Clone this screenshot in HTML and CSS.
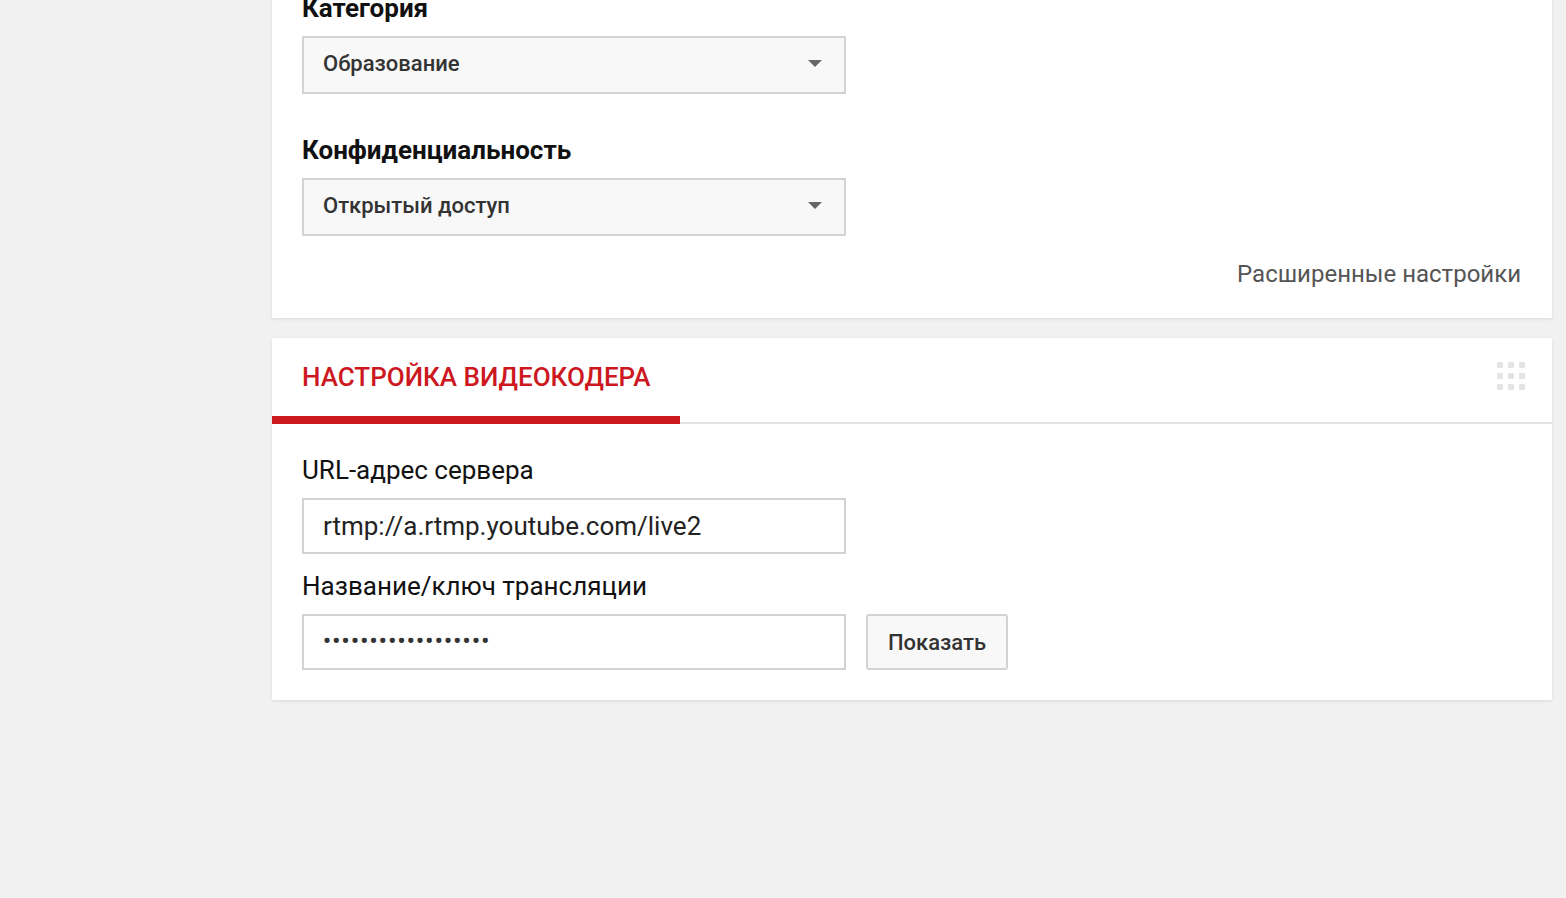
FILE: index.html
```html
<!DOCTYPE html>
<html lang="ru">
<head>
  <meta charset="UTF-8">
  <title>Прямая трансляция</title>
  <link rel="stylesheet" href="styles.css">
</head>
<body>
  <div class="page">
    <section class="card card-info">
      <div class="field">
        <label class="field-label bold">Категория</label>
        <div class="select">
          <span>Образование</span>
          <span class="arrow"></span>
        </div>
      </div>
      <div class="field">
        <label class="field-label bold">Конфиденциальность</label>
        <div class="select">
          <span>Открытый доступ</span>
          <span class="arrow"></span>
        </div>
      </div>
      <div class="advanced">
        <a href="#" class="advanced-link">Расширенные настройки</a>
      </div>
    </section>

    <section class="card card-encoder">
      <div class="card-header">
        <div class="tab">НАСТРОЙКА ВИДЕОКОДЕРА</div>
        <div class="drag-handle">
          <span></span><span></span><span></span>
          <span></span><span></span><span></span>
          <span></span><span></span><span></span>
        </div>
      </div>
      <div class="card-body">
        <div class="field">
          <label class="field-label" for="server-url">URL-адрес сервера</label>
          <input type="text" id="server-url" class="text-input" value="rtmp://a.rtmp.youtube.com/live2" readonly>
        </div>
        <div class="field">
          <label class="field-label" for="stream-key">Название/ключ трансляции</label>
          <div class="key-row">
            <div class="text-input key-input" id="stream-key">••••••••••••••••••</div>
            <button class="show-btn">Показать</button>
          </div>
        </div>
      </div>
    </section>
  </div>
</body>
</html>
```

FILE: styles.css
```css
:root {
  --page-bg: #f1f1f1;
  --border: #d3d3d3;
  --field-bg: #f8f8f8;
  --text: #222;
  --red: #cc181e;
}

body {
  margin: 0;
  background-color: var(--page-bg);
  font-family: Roboto, 'Noto Sans', Arial, sans-serif;
  color: var(--text);
}

.page {
  width: 1280px;
  margin-left: 272px;
  margin-top: -30px;
}

.card {
  background-color: white;
  box-shadow: 0 1px 3px rgba(0,0,0,0.1);
  margin-bottom: 20px;
}

.card-info {
  padding: 24px 31px 30px 30px;
}

.field-label {
  display: block;
  font-size: 26px;
  line-height: 28px;
  margin-bottom: 14px;
  color: #111;
}

.field-label.bold {
  font-weight: 700;
  font-size: 26px;
}

.card-info .field + .field {
  margin-top: 42px;
}

.select {
  width: 544px;
  height: 58px;
  box-sizing: border-box;
  border: 2px solid var(--border);
  background-color: var(--field-bg);
  display: flex;
  align-items: center;
  justify-content: space-between;
  padding: 0 22px 3px 19px;
  font-size: 22px;
  font-weight: 500;
  color: #333;
}

.arrow {
  width: 0;
  height: 0;
  border-left: 7px solid transparent;
  border-right: 7px solid transparent;
  border-top: 7px solid #666;
}

.advanced {
  display: flex;
  justify-content: flex-end;
  margin-top: 24px;
}

.advanced-link {
  font-size: 24px;
  line-height: 28px;
  color: #555;
  text-decoration: none;
}

.card-header {
  display: flex;
  justify-content: space-between;
  align-items: center;
  border-bottom: 2px solid #e4e4e4;
  height: 84px;
}

.tab {
  box-sizing: border-box;
  width: 408px;
  height: 86px;
  margin-bottom: -2px;
  padding: 0 30px;
  display: flex;
  align-items: center;
  white-space: nowrap;
  border-bottom: 8px solid var(--red);
  color: var(--red);
  font-size: 26px;
  font-weight: 500;
}

.drag-handle {
  display: grid;
  grid-template-columns: repeat(3, 6px);
  gap: 5px;
  margin-right: 27px;
  margin-top: -8px;
}

.drag-handle span {
  width: 6px;
  height: 6px;
  border-radius: 1px;
  background-color: #e4e4e4;
}

.card-body {
  padding: 32px 30px 30px;
}

.card-body .field + .field {
  margin-top: 18px;
}

.text-input {
  display: block;
  width: 544px;
  height: 56px;
  box-sizing: border-box;
  border: 2px solid var(--border);
  background-color: white;
  padding: 0 19px;
  font-family: inherit;
  font-size: 26px;
  color: var(--text);
  outline: none;
}

.key-row {
  display: flex;
  align-items: center;
  gap: 20px;
}

.key-input {
  display: flex;
  align-items: center;
  font-size: 22px;
  font-weight: 700;
  letter-spacing: 1.4px;
  padding-bottom: 4px;
  color: #333;
}

.show-btn {
  height: 56px;
  width: 142px;
  box-sizing: border-box;
  border: 2px solid var(--border);
  border-radius: 3px;
  background-color: var(--field-bg);
  font-family: inherit;
  font-size: 22px;
  font-weight: 500;
  color: #333;
  cursor: pointer;
}
```
